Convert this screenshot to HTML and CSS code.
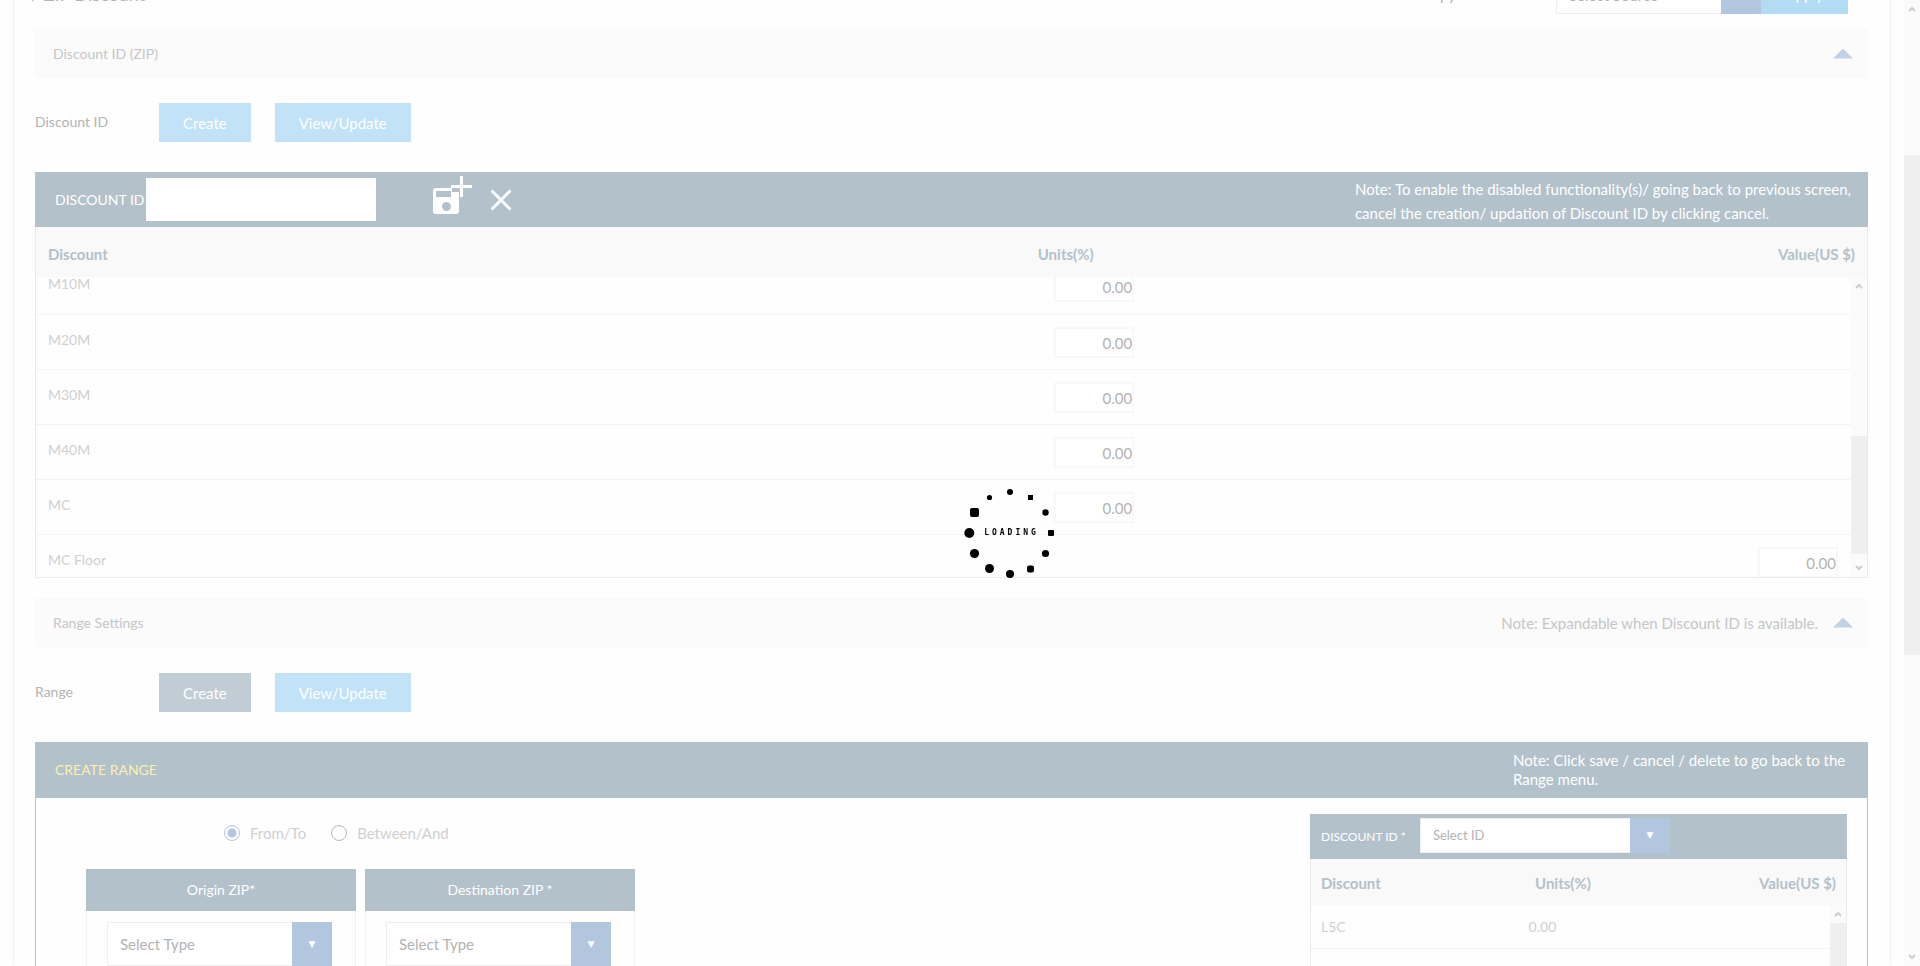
FILE: index.html
```html
<!DOCTYPE html>
<html lang="en">
<head>
<meta charset="utf-8">
<title>ZIP Discount</title>
<link rel="stylesheet" href="styles.css">
</head>
<body>
<main class="card">
  <header class="topbar">
    <h1 class="title"><span class="title-mark">/</span> ZIP Discount</h1>
    <label class="source-label" for="source">Copy</label>
    <span class="dropdown source"><select id="source"><option>Select Source</option></select></span>
    <button class="apply" type="button">Apply</button>
  </header>

  <section>
    <div class="bar">
      <h2>Discount ID (ZIP)</h2>
      <button class="collapse" type="button" aria-label="Collapse Discount ID"></button>
    </div>
    <div class="actions">
      <span class="actions-label">Discount ID</span>
      <button class="btn" type="button">Create</button>
      <button class="btn" type="button">View/Update</button>
    </div>

    <div class="panel-head panel-head-id">
      <label for="discount-id">DISCOUNT ID</label>
      <input class="id-input" id="discount-id" type="text">
      <button class="icon-btn save" type="button" aria-label="Save">
        <svg width="42" height="42" viewBox="0 0 42 42"><path fill="#fff" fill-rule="evenodd" d="M3 13h16v4h7v19a3 3 0 0 1-3 3H3a3 3 0 0 1-3-3V16a3 3 0 0 1 3-3zM3 16v6h15v-6zM13.500 27a4.500 4.500 0 1 0 0 9a4.500 4.500 0 0 0 0-9z"/><path stroke="#fff" stroke-width="3" d="M28.500 1v21M18 11.500h21"/></svg>
      </button>
      <button class="icon-btn" type="button" aria-label="Cancel">
        <svg width="22" height="22" viewBox="0 0 22 22"><path stroke="#fff" stroke-width="3" d="M1.500 1.500l19 19M20.500 1.500l-19 19"/></svg>
      </button>
      <p class="note note-wide">Note: To enable the disabled functionality(s)/ going back to previous screen,<br>cancel the creation/ updation of Discount ID by clicking cancel.</p>
    </div>
    <div class="grid-box">
      <table class="grid grid-head">
        <tr><th class="c-name">Discount</th><th class="c-units">Units(%)</th><th class="c-value">Value(US $)</th></tr>
      </table>
      <div class="scroller">
        <div class="viewport">
          <table class="grid grid-body">
            <tr><td class="c-name">M10M</td><td class="c-units"><input aria-label="M10M units" value="0.00"></td><td class="c-value"></td></tr>
            <tr><td class="c-name">M20M</td><td class="c-units"><input aria-label="M20M units" value="0.00"></td><td class="c-value"></td></tr>
            <tr><td class="c-name">M30M</td><td class="c-units"><input aria-label="M30M units" value="0.00"></td><td class="c-value"></td></tr>
            <tr><td class="c-name">M40M</td><td class="c-units"><input aria-label="M40M units" value="0.00"></td><td class="c-value"></td></tr>
            <tr><td class="c-name">MC</td><td class="c-units"><input aria-label="MC units" value="0.00"></td><td class="c-value"></td></tr>
            <tr><td class="c-name">MC Floor</td><td class="c-units"></td><td class="c-value"><input aria-label="MC Floor value" value="0.00"></td></tr>
          </table>
        </div>
        <div class="track">
          <svg class="chev" viewBox="0 0 8 6"><path d="M1 5l3-3 3 3"/></svg>
          <i class="thumb thumb-low"></i>
          <svg class="chev" viewBox="0 0 8 6"><path d="M1 1l3 3 3-3"/></svg>
        </div>
      </div>
    </div>
  </section>

  <section class="range">
    <div class="bar">
      <h2>Range Settings</h2>
      <span class="bar-note">Note: Expandable when Discount ID is available.</span>
      <button class="collapse" type="button" aria-label="Collapse Range Settings"></button>
    </div>
    <div class="actions">
      <span class="actions-label">Range</span>
      <button class="btn btn-active" type="button">Create</button>
      <button class="btn" type="button">View/Update</button>
    </div>

    <div class="panel-head">
      <h3>CREATE RANGE</h3>
      <p class="note note-narrow">Note: Click save / cancel / delete to go back to the Range menu.</p>
    </div>
    <div class="range-body">
      <div class="range-left">
        <div class="radios">
          <label><input type="radio" name="mode" checked>From/To</label>
          <label><input type="radio" name="mode">Between/And</label>
        </div>
        <div class="zips">
          <div class="zip">
            <label class="zip-head" for="origin">Origin ZIP*</label>
            <div class="zip-body"><span class="dropdown"><select id="origin"><option>Select Type</option></select></span></div>
          </div>
          <div class="zip">
            <label class="zip-head" for="dest">Destination ZIP *</label>
            <div class="zip-body"><span class="dropdown"><select id="dest"><option>Select Type</option></select></span></div>
          </div>
        </div>
      </div>
      <div class="side">
        <div class="side-head">
          <label for="side-id">DISCOUNT ID *</label>
          <span class="dropdown side-select"><select id="side-id"><option>Select ID</option></select></span>
        </div>
        <div class="side-box">
          <table class="grid side-grid-head">
            <tr><th class="s-name">Discount</th><th class="s-units">Units(%)</th><th class="s-value">Value(US $)</th></tr>
          </table>
          <div class="scroller">
            <div class="viewport">
              <table class="grid side-grid">
                <tr><td class="s-name">L5C</td><td class="s-units">0.00</td><td class="s-value"></td></tr>
              </table>
            </div>
            <div class="track">
              <svg class="chev" viewBox="0 0 8 6"><path d="M1 5l3-3 3 3"/></svg>
              <i class="thumb thumb-fill"></i>
            </div>
          </div>
        </div>
      </div>
    </div>
  </section>
</main>
<div class="track page-track">
  <svg class="chev" viewBox="0 0 8 6"><path d="M1 5l3-3 3 3"/></svg>
  <i class="thumb thumb-page"></i>
  <svg class="chev" viewBox="0 0 8 6"><path d="M1 1l3 3 3-3"/></svg>
</div>
<div class="loading" role="status">
  <svg width="92" height="92" viewBox="0 0 92 92"><circle cx="46" cy="5" r="3"/><rect x="64" y="8" width="5" height="5"/><circle cx="81.500" cy="25.500" r="3.200"/><rect x="84" y="43" width="6" height="6" rx="1"/><circle cx="81.500" cy="66.500" r="3.600"/><rect x="63" y="78.500" width="7" height="7" rx="2"/><circle cx="46" cy="87" r="4"/><circle cx="25.500" cy="81.500" r="4.500"/><circle cx="10.500" cy="66.500" r="4.600"/><circle cx="5.300" cy="46" r="5"/><rect x="6" y="21" width="9" height="9" rx="2"/><circle cx="25.500" cy="10.500" r="2.600"/></svg>
  <span>LOADING</span>
</div>
</body>
</html>
```

FILE: styles.css
```css
* { box-sizing: border-box; }

body {
  margin: 0;
  height: 100vh;
  overflow: hidden;
  display: flex;
  background: #fefefe;
  color: #b3b3b3;
  font: 15px/20px Lato, Carlito, sans-serif;
}

h1, h2, h3, p { margin: 0; font-weight: 400; font-size: inherit; }
button, input, select { font: inherit; border-radius: 0; }
button { border: 0; padding: 0; }

.card {
  flex: 1;
  min-width: 0;
  height: 100%;
  overflow: hidden;
  margin: 0 15px;
  padding: 0 21px 0 20px;
  background: #fefefe;
  box-shadow: 0 0 5px #e8e8e8;
}

/* top bar, partly scrolled out of view */
.topbar {
  display: flex;
  align-items: flex-start;
  margin-top: -20px;
  margin-bottom: 15px;
  padding-right: 20px;
}
.title { flex: 1; font-size: 18px; line-height: 28px; margin-left: -4px; }
.title-mark { color: #b3c6df; }
.source-label { font-size: 15px; line-height: 28px; margin-right: 100px; }
.source { width: 205px; height: 34px; }
.apply { width: 87px; height: 34px; padding-bottom: 6px; background: #b2dcf4; color: #fff; }

.dropdown { position: relative; display: block; }
.dropdown select {
  display: block;
  width: 100%;
  height: 100%;
  appearance: none;
  border: 1px solid #efefef;
  background: #fff;
  color: #b3b3b3;
  padding: 0 50px 0 12px;
}
.dropdown::after {
  content: "▼";
  position: absolute;
  top: 0;
  right: 0;
  bottom: 0;
  width: 40px;
  display: grid;
  place-items: center;
  background: #b3c6df;
  color: #fff;
  font: 9px "DejaVu Sans", sans-serif;
  pointer-events: none;
}
.dropdown.source select { padding-bottom: 4px; }
.dropdown.source::after { content: ""; }

.bar {
  display: flex;
  align-items: center;
  gap: 15px;
  height: 49px;
  padding: 0 15px 0 18px;
  background: #fbfbfb;
  color: #c6c6c6;
}
.bar h2 { flex: 1; font-size: 14px; }
.collapse {
  width: 20px;
  height: 10px;
  background: #c2d1e5;
  clip-path: polygon(50% 0, 100% 100%, 0 100%);
}

.actions {
  display: flex;
  align-items: center;
  gap: 24px;
  padding: 25px 0 30px;
}
.actions-label { width: 100px; padding-bottom: 2px; font-size: 14px; }
.btn { height: 39px; padding: 0 24px; background: #c2e2f7; color: #fff; }
.btn-active { background: #c1cdd5; }

.panel-head {
  display: flex;
  align-items: center;
  min-height: 56px;
  padding: 0 17px 0 20px;
  background: #b3c1ca;
  color: #fff;
}
.panel-head-id { min-height: 55px; }
.panel-head label { font-size: 14px; }
.panel-head h3 { flex: 1; color: #fbf0b0; font-size: 14px; }
.id-input {
  width: 230px;
  height: 43px;
  margin: 0 57px 0 1px;
  border: 0;
  background: #fff;
}
.icon-btn { display: flex; background: none; }
.save { margin: -8px 15px 0 0; }
.note-wide { margin-left: auto; padding-top: 2px; line-height: 24px; }
.note-narrow { width: 338px; line-height: 19px; }

.grid-box { border: 1px solid #ebebeb; border-top-width: 0; }
.grid { width: 100%; border-collapse: collapse; table-layout: fixed; }
.grid th { font-weight: 700; color: #b3c1ca; background: #f9f9f9; padding: 0; text-align: left; }
.grid td { padding: 0; color: #d0d0d0; vertical-align: top; }
.grid-head th { height: 50px; padding-top: 3px; }
.grid .c-name { width: 54%; padding-left: 12px; }
.grid .c-units { width: 16%; }
.grid .c-value { text-align: right; }
.grid-head .c-units { padding-left: 13px; }
.grid-head .c-value { padding-right: 12px; }

.scroller { display: flex; }
.viewport { flex: 1; overflow: hidden; }
.grid-box .scroller { height: 300px; }
.grid-body { margin-top: -18px; }
.grid-body tr { height: 55px; border-bottom: 1px solid #f4f4f4; }
.grid-body .c-name { padding-top: 15px; font-size: 14px; }
.grid-body .c-units { padding: 12px 0 0 38px; }
.grid-body .c-value { padding: 12px 13px 0 0; }
.grid-body input {
  width: 80px;
  height: 31px;
  padding: 1px 0 0;
  border: 2px solid #f8f8f8;
  background: #fff;
  color: #b3b3b3;
  text-align: right;
}

.track {
  width: 16px;
  flex: none;
  display: flex;
  flex-direction: column;
  align-items: center;
  background: #fbfbfb;
}
.chev { width: 8px; height: 6px; margin: 6px 0; fill: none; stroke: #cdcdcd; stroke-width: 2; }
.thumb { width: 100%; background: #efefef; }
.thumb-low { height: 118px; margin-top: auto; margin-bottom: 5px; }
.thumb-fill { flex: 1; }
.thumb-page { height: 500px; margin-top: 137px; margin-bottom: auto; }

.range { margin-top: 20px; }
.range .actions { padding-top: 26px; }
.range-body {
  display: flex;
  justify-content: space-between;
  align-items: flex-start;
  padding: 16px 20px 0 50px;
  border: 1px solid #b3c1ca;
  border-width: 0 1px;
}
.radios { display: flex; gap: 25px; padding: 9px 0 26px 138px; color: #d0d0d0; }
.radios label { display: flex; align-items: center; gap: 10px; }
.radios input {
  appearance: none;
  width: 16px;
  height: 16px;
  margin: 0;
  border: 1px solid #b8b8b8;
  border-radius: 50%;
}
.radios input:checked {
  border-color: #b3c6df;
  background: radial-gradient(circle, #b3c6df 4px, transparent 5px);
}
.zips { display: flex; gap: 9px; }
.zip { width: 270px; }
.zip-head {
  display: grid;
  place-items: center;
  height: 42px;
  background: #b3c1ca;
  color: #fff;
  font-size: 14px;
}
.zip-body { padding: 11px 23px 24px 20px; border: 1px solid #f0f0f0; border-top: 0; }
.zip .dropdown { height: 44px; }

.side { width: 537px; }
.side-head {
  display: flex;
  align-items: center;
  gap: 14px;
  height: 45px;
  padding: 0 11px 3px;
  background: #b3c1ca;
  color: #fff;
  font-size: 13px;
}
.side-head label { font-size: 12px; padding-top: 4px; }
.side-select { width: 250px; height: 35px; }
.side-box { border: 1px solid #ebebeb; border-top: 0; }
.side-box .scroller { height: 160px; }
.side-grid-head th { height: 46px; padding-top: 2px; }
.side-grid tr { height: 43px; border-bottom: 1px solid #f4f4f4; }
.side-grid td { padding-top: 12px; font-size: 14px; }
.grid .s-name { width: 40%; padding-left: 10px; }
.grid .s-units { width: 20%; padding-left: 10px; }
.grid .s-value { text-align: right; padding-right: 10px; }

.loading {
  position: fixed;
  left: calc(50% + 4px);
  top: 487px;
  display: grid;
  place-items: center;
  color: #000;
  font: 700 8px/8px "DejaVu Sans Mono", monospace;
  letter-spacing: 3px;
}
.loading > * { grid-area: 1 / 1; }
.loading span { padding-left: 3px; }
```
